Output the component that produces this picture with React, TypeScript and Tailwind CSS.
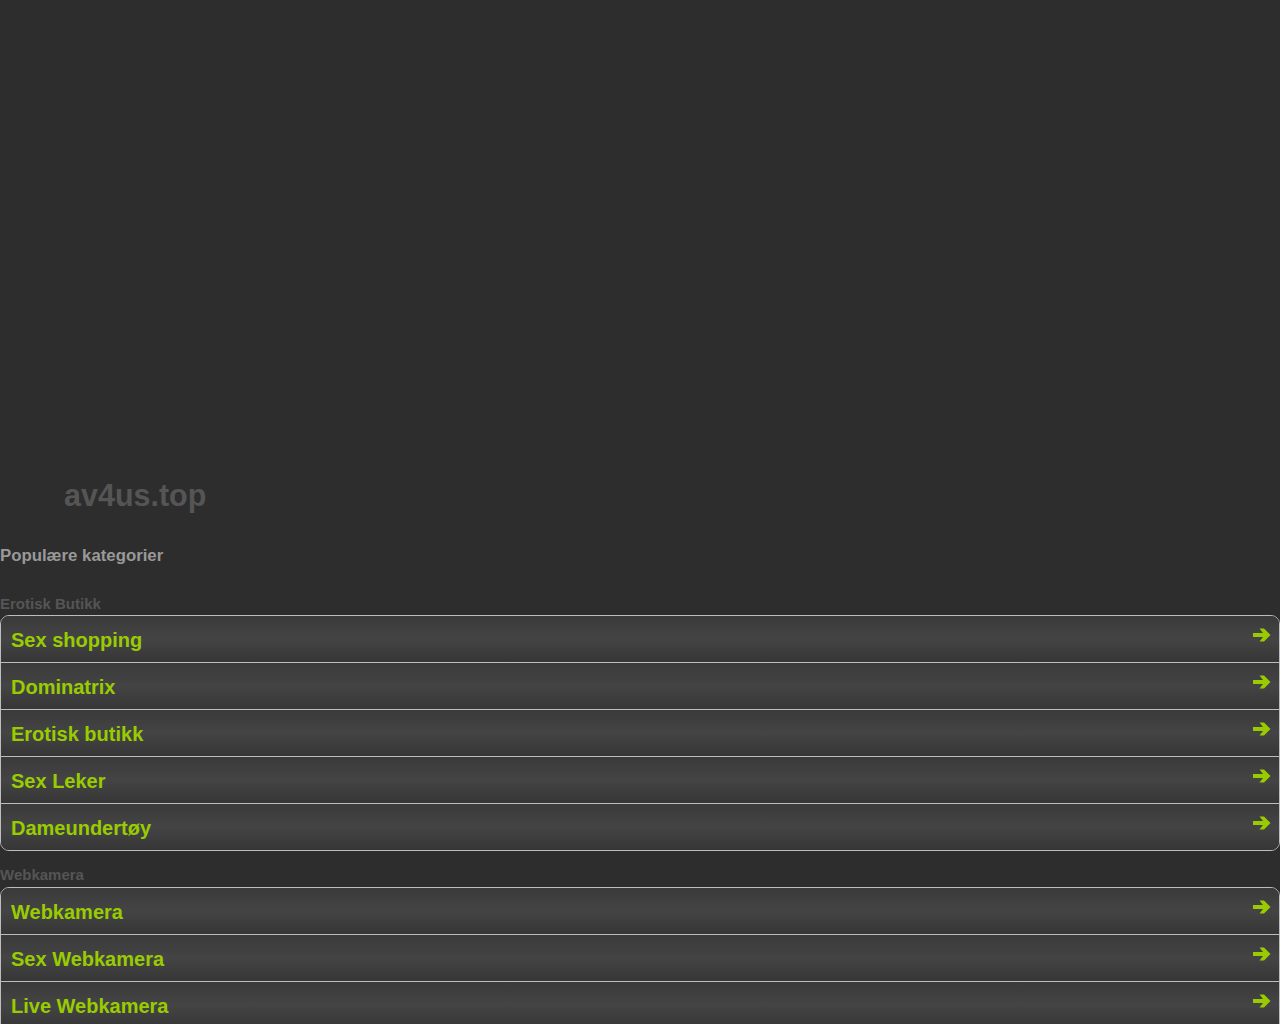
import React from 'react';

const groups = [
  {
    label: 'Erotisk Butikk',
    items: ['Sex shopping', 'Dominatrix', 'Erotisk butikk', 'Sex Leker', 'Dameundertøy'],
  },
  {
    label: 'Webkamera',
    items: ['Webkamera', 'Sex Webkamera', 'Live Webkamera', 'Gratis Webkamera', 'Webkamera Chat'],
  },
];

const Arrow: React.FC = () => (
  <svg width="18" height="16" viewBox="0 0 18 16" className="shrink-0">
    <path d="M0 6 H10 L6.5 1.5 H11 L17.5 8 L11 14.5 H6.5 L10 10 H0 Z" fill="#99cc00" />
  </svg>
);

const App: React.FC = () => {
  return (
    <div className="min-h-screen bg-[#2d2d2d] font-['Liberation_Sans',Arial,sans-serif]">
      {/* banner area */}
      <div className="h-[473px]" />

      <h1 className="pl-16 text-[30.5px] font-bold leading-normal text-[#555555]">av4us.top</h1>

      <h2 className="mt-[24px] text-[16.8px] font-bold leading-normal text-[#999999]">Populære kategorier</h2>

      <div className="mt-[25px]">
        {groups.map((group, gi) => (
          <div key={group.label} className={gi > 0 ? 'mt-[13px]' : ''}>
            <div className="text-[15px] font-bold leading-normal text-[#555555]">{group.label}</div>
            <ul className="overflow-hidden rounded-[9px] border border-[#bdbdbd]">
              {group.items.map((item, i) => (
                <li
                  key={item}
                  className={`flex items-center justify-between bg-gradient-to-b from-[#3a3a3a] via-[#444444] to-[#363636] pt-[2px] pl-[10px] pr-[8px] ${
                    i > 0 ? 'h-[47px] border-t border-[#bdbdbd]' : 'h-[46px]'
                  }`}
                >
                  <span className="text-[20px] font-bold leading-normal text-[#99cc00]">{item}</span>
                  <span className="-mt-[10px]">
                    <Arrow />
                  </span>
                </li>
              ))}
            </ul>
          </div>
        ))}
      </div>
    </div>
  );
};

export default App;
